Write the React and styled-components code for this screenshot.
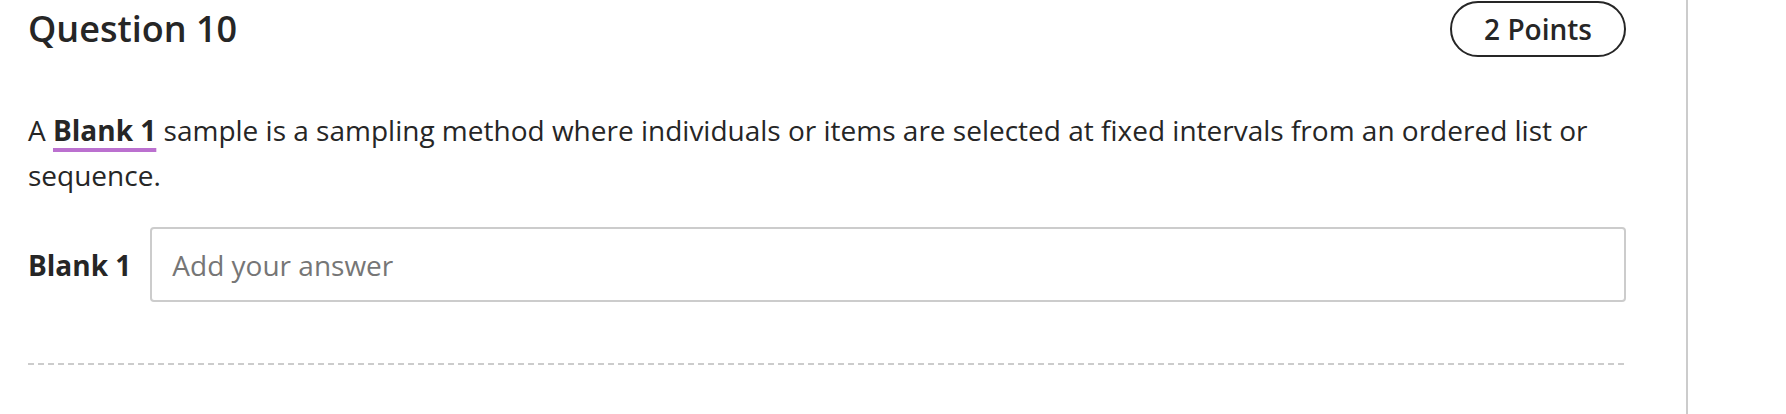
import React from "react";
import styled, { createGlobalStyle } from "styled-components";

const GlobalStyle = createGlobalStyle`
  html, body {
    margin: 0;
    padding: 0;
    background: #ffffff;
  }
  body {
    font-family: "Open Sans", "Noto Sans", sans-serif;
    color: #262626;
  }
`;

function App() {
  return (
    <>
      <GlobalStyle />
      <Page>
        <Main>
          <Header>
            <Title>Question 10</Title>
            <Points>2 Points</Points>
          </Header>
          <Prompt>
            A <BlankRef>Blank 1</BlankRef> sample is a sampling method where
            individuals or items are selected at fixed intervals from an
            ordered list or sequence.
          </Prompt>
          <AnswerRow>
            <BlankLabel htmlFor="blank-1">Blank 1</BlankLabel>
            <AnswerInput id="blank-1" placeholder="Add your answer" />
          </AnswerRow>
          <Divider />
        </Main>
        <SidePanel />
      </Page>
    </>
  );
}

export default App;

const Page = styled.div`
  display: flex;
  min-height: 414px;
`;

const Main = styled.div`
  width: 1598px;
  padding: 1px 0 0 28px;
  display: flex;
  flex-direction: column;
`;

const Header = styled.div`
  display: flex;
  align-items: center;
  justify-content: space-between;
  height: 56px;
`;

const Title = styled.h2`
  margin: 0;
  font-size: 36px;
  font-weight: 600;
  line-height: 1;
  color: #262626;
`;

const Points = styled.div`
  box-sizing: border-box;
  height: 56px;
  display: flex;
  align-items: center;
  padding: 0 32px;
  border: 2px solid #262626;
  border-radius: 999px;
  font-size: 28px;
  font-weight: 600;
  color: #262626;
`;

const Prompt = styled.p`
  margin: 51px 0 0;
  font-size: 28px;
  line-height: 45px;
  color: #262626;
`;

const BlankRef = styled.strong`
  font-weight: 700;
  text-decoration: underline;
  text-decoration-color: #bb70cf;
  text-decoration-thickness: 4px;
  text-underline-offset: 7px;
`;

const AnswerRow = styled.div`
  display: flex;
  align-items: center;
  gap: 19px;
  margin-top: 29px;
`;

const BlankLabel = styled.label`
  font-size: 28px;
  font-weight: 700;
  color: #262626;
  white-space: nowrap;
`;

const AnswerInput = styled.input`
  flex: 1;
  box-sizing: border-box;
  height: 75px;
  padding: 0 20px;
  border: 2px solid #cccccc;
  border-radius: 4px;
  font-family: "Open Sans", "Noto Sans", sans-serif;
  font-size: 28px;
  color: #262626;
  outline: none;

  &::placeholder {
    color: #767676;
  }
`;

const Divider = styled.div`
  margin-top: 61px;
  height: 2px;
  background: repeating-linear-gradient(
    to right,
    #cccccc 0 6px,
    transparent 6px 10px
  );
`;

const SidePanel = styled.div`
  margin-left: 60px;
  flex: 1;
  border-left: 2px solid #cccccc;
`;
